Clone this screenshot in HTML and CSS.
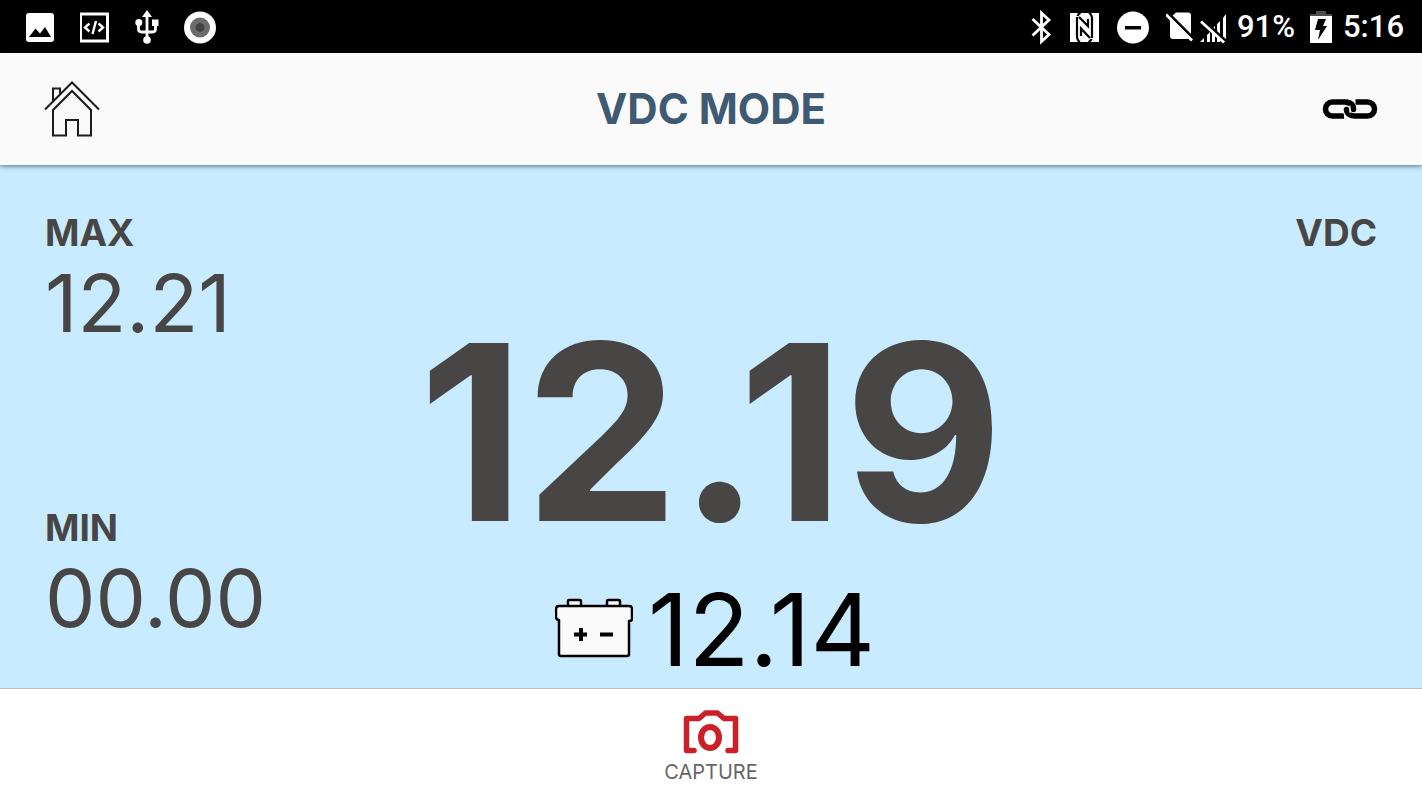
FILE: index.html
```html
<!DOCTYPE html>
<html lang="en">
<head>
<meta charset="utf-8">
<meta name="viewport" content="width=device-width, initial-scale=1">
<title>VDC Mode</title>
<link rel="stylesheet" href="styles.css">
</head>
<body>
<div class="status">
  <div class="status-left">
    <svg width="30" height="34" viewBox="0 0 30 34" aria-hidden="true"><rect x="1" y="3" width="28" height="29" rx="3" fill="#fff"/><path d="M4 27l6.500-8.500 4.500 5 5-6.500 6 10z" fill="#000"/></svg>
    <svg width="30" height="34" viewBox="0 0 30 34" fill="none" stroke="#fff" aria-hidden="true"><rect x="0.500" y="4" width="27" height="27" stroke-width="3"/><path d="M9.500 13.500L5 17.500l4.500 4M18.500 13.500l4.500 4-4.500 4M16 11l-3.500 13" stroke-width="2.400"/></svg>
    <svg width="24" height="36" viewBox="0 0 24 36" fill="none" stroke="#fff" stroke-width="2.800" aria-hidden="true"><path d="M12 5v26M3.500 14v6q0 3 3 3h11q3 0 3-3v-4"/><g fill="#fff" stroke="none"><path d="M12 1l5 7H7z"/><circle cx="12" cy="31" r="3.800"/><circle cx="3.800" cy="13.500" r="3.500"/><path d="M17 10.500h6.500v6.500H17z"/></g></svg>
    <svg width="32" height="34" viewBox="0 0 32 34" aria-hidden="true"><circle cx="16" cy="17.500" r="16" fill="#fff"/><circle cx="16" cy="17.500" r="10" fill="#6c6c6c"/><circle cx="16" cy="17.500" r="4.500" fill="#444"/></svg>
  </div>
  <div class="status-right">
    <svg width="22" height="36" viewBox="0 0 22 36" fill="none" stroke="#fff" stroke-width="2.800" aria-hidden="true"><path d="M1.500 10L18 25.500l-7.500 7V4l7.500 7L1.500 26.500"/></svg>
    <svg width="30" height="34" viewBox="0 0 30 34" aria-hidden="true"><path d="M0 3h29v29H0z" fill="#fff"/><path d="M10 32Q7 30.500 7 26V7M10.500 3Q8 4 7.500 6M19 3Q22 4.500 22 9v19M18.500 32Q21 31 21.500 29M9 7l9 9V9M20 28l-9-9.500V26" fill="none" stroke="#000" stroke-width="2.200"/></svg>
    <svg width="32" height="34" viewBox="0 0 32 34" aria-hidden="true"><circle cx="16" cy="17.500" r="16" fill="#fff"/><path d="M8 16h16v3.500H8z"/></svg>
    <svg class="signals" width="62" height="34" viewBox="0 0 62 34" aria-hidden="true"><path d="M10 2.500h12q3 0 3 3V26q0 3-3 3H7q-3 0-3-3V8z" fill="#fff"/><path d="M2 3l28 28" stroke="#000" stroke-width="3"/><path d="M0 4.500l26 26" stroke="#fff" stroke-width="2.800"/><path d="M34 32l4-4v4zM41 32v-7l3-3v10zM46 32V19l3-3v16zM51 32V14l3-3v21zM57 32V8l3-4v28z" fill="#fff"/><path d="M37 10l24 22" stroke="#000" stroke-width="3"/><path d="M35 11.500l23 21" stroke="#fff" stroke-width="2.800"/></svg>
    <span class="percent">91%</span>
    <svg class="charge" width="22" height="36" viewBox="0 0 22 36" aria-hidden="true"><path d="M6 2h10v3h6v5H0V5h6z" fill="#4c4c4c"/><path d="M0 7h22v27H0z" fill="#fff"/><path d="M8 10h8l-3 7h4L8 31l2-10H5z"/></svg>
    <span>5:16</span>
  </div>
</div>
<header class="header">
  <button class="icon-button" aria-label="Home"><svg width="56" height="58" viewBox="0 0 56 58" fill="none" stroke="#1c1c1c" stroke-width="2" aria-hidden="true"><path d="M1 29.500L28 2.500l27 27M9 21V8.500h7V14M9 55.500V30l19-19 19 19v25.500H34V40H22v15.500z"/></svg></button>
  <h1 class="title">VDC MODE</h1>
  <button class="icon-button" aria-label="Connection"><svg width="56" height="22" viewBox="0 0 56 22" fill="none" stroke="#000" stroke-width="5.500" aria-hidden="true"><path d="M22 18H10.500a7 7 0 0 1 0-14H23.500C29 4 31.500 7.500 31.500 11"/><path d="M34 4h11.500a7 7 0 0 1 0 14H32.500C27 18 24.500 15 24.500 11" stroke="#fafafa" stroke-width="8"/><path d="M33.500 4h12a7 7 0 0 1 0 14H32.500C27 18 24.500 15 24.500 11.500"/><path d="M25 4.500C29.500 5 31.500 8 31.500 11.500" stroke-linecap="round"/><path d="M24.500 11.500v.1" stroke-linecap="round"/><path d="M28 7.500v7.500" stroke="#fafafa" stroke-width="1"/></svg></button>
</header>
<main class="meter">
  <div class="limits">
    <section>
      <h2 class="label">MAX</h2>
      <p class="value">12.21</p>
    </section>
    <section>
      <h2 class="label">MIN</h2>
      <p class="value">00.00</p>
    </section>
  </div>
  <div class="center">
    <p class="reading">12.19</p>
    <div class="battery">
      <svg width="78" height="64" viewBox="0 0 78 64" fill="#fafafa" stroke="#000" stroke-width="2.500" stroke-linejoin="round" aria-hidden="true"><rect x="13" y="2" width="13" height="8" rx="1"/><rect x="52" y="2" width="13" height="8" rx="1"/><path d="M4 8h70q3 0 3 3v10q0 2-3 2v33q0 2-2 2H6q-2 0-2-2V22q-3 0-3-3v-8q0-3 3-3z"/><path d="M26 30v13M19 36.500h13M45 36.500h13" stroke-width="4"/></svg>
      <span>12.14</span>
    </div>
  </div>
  <p class="label unit">VDC</p>
</main>
<footer class="footer">
  <button class="capture">
    <svg width="56" height="44" viewBox="0 0 56 44" fill="none" stroke="#cb2027" aria-hidden="true"><path d="M11 40.500H3.500V8.500H16L22.500 3h12L41 8.500h11.500v32H45" stroke-width="5.500" stroke-linejoin="round" stroke-linecap="round"/><ellipse cx="27" cy="27.500" rx="9" ry="10.500" stroke-width="6"/></svg>
    <span>CAPTURE</span>
  </button>
</footer>
</body>
</html>
```
FILE: styles.css
```css
* {
  box-sizing: border-box;
}

body {
  margin: 0;
  min-height: 100vh;
  display: flex;
  flex-direction: column;
  font-family: Inter, "Open Sans", sans-serif;
  color: #484644;
  background: #fff;
}

h1,
h2,
p {
  margin: 0;
}

svg {
  display: block;
  flex: none;
}

button {
  padding: 0;
  border: 0;
  background: none;
  font: inherit;
  color: inherit;
  cursor: pointer;
}

.status {
  height: 53px;
  padding: 0 18px 0 25px;
  display: flex;
  align-items: center;
  justify-content: space-between;
  background: #000;
  color: #fff;
  font: 500 31px/36px Roboto, sans-serif;
}

.status-left {
  display: flex;
  align-items: center;
  gap: 25px;
}

.status-right {
  display: flex;
  align-items: center;
  gap: 17px;
}

.signals {
  margin-right: -8px;
}

.charge {
  margin: 0 -6px 0 -2px;
}

.header {
  position: relative;
  z-index: 1;
  height: 112px;
  padding: 0 44px;
  display: grid;
  grid-template-columns: 1fr auto 1fr;
  align-items: center;
  background: #fafafa;
  box-shadow: 0 1px 5px rgba(0, 30, 50, 0.6);
}

.icon-button:first-child {
  justify-self: start;
}

.icon-button:last-child {
  justify-self: end;
}

.title {
  font-size: 42px;
  line-height: 48px;
  font-weight: 700;
  color: #3f5a73;
}

.meter {
  flex: 1;
  padding: 44px 45px 0;
  display: grid;
  grid-template-columns: 1fr auto 1fr;
  background: #c8ebff;
}

.limits {
  padding-bottom: 44px;
  display: flex;
  flex-direction: column;
  justify-content: space-between;
}

.label {
  font-size: 37px;
  line-height: 48px;
  font-weight: 700;
}

.value {
  font-size: 80px;
  line-height: 92px;
}

.unit {
  text-align: right;
}

.center {
  display: flex;
  flex-direction: column;
  align-items: center;
  justify-content: flex-end;
}

.reading {
  font-size: 245px;
  line-height: 280px;
  font-weight: 700;
}

.battery {
  padding-left: 8px;
  display: flex;
  align-items: center;
  gap: 15px;
  font-size: 100px;
  line-height: 116px;
  color: #000;
}

.footer {
  height: 112px;
  display: flex;
  justify-content: center;
  border-top: 1px solid #b9bdc0;
}

.capture {
  padding: 4px 16px 0;
  display: flex;
  flex-direction: column;
  align-items: center;
  justify-content: center;
  gap: 6px;
  font-size: 20px;
  line-height: 24px;
  color: #666;
}
```
